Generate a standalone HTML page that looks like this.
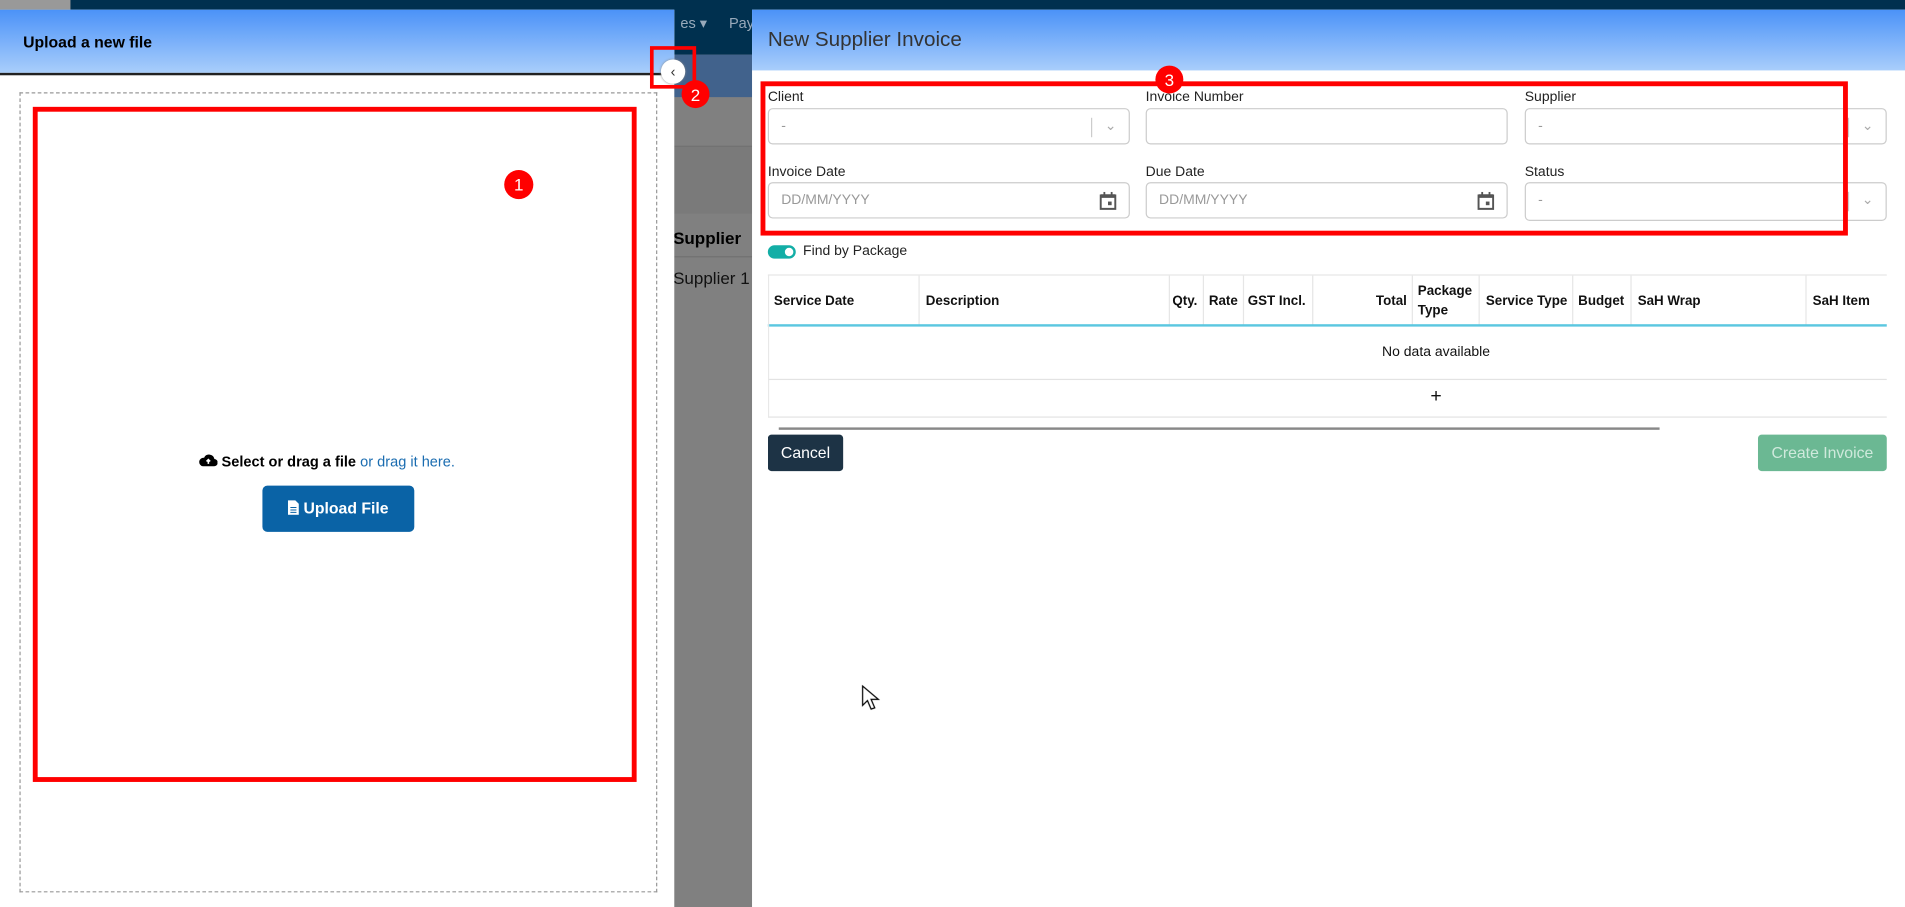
<!DOCTYPE html>
<html><head><meta charset="utf-8"><style>
html,body{margin:0;padding:0;width:1905px;height:907px;overflow:hidden;background:#808080}
#s{position:absolute;left:0;top:0;width:1568px;height:747px;transform:scale(1.21492,1.2142);transform-origin:0 0;font-family:"Liberation Sans",sans-serif;background:#808080}
.a{position:absolute}
.hdr{background:linear-gradient(#4b92f8,#a9cefb)}
.red{position:absolute;border:4px solid #f00;box-sizing:border-box}
.badge{position:absolute;width:24px;height:24px;border-radius:50%;background:#f00;color:#fff;font-size:14px;text-align:center;line-height:24px}
.lbl{position:absolute;font-size:11.5px;color:#222}
.inp{position:absolute;height:30px;border:1px solid #ccc;border-radius:4px;box-sizing:border-box;background:#fff;font-size:11.5px;color:#999;line-height:28px;padding-left:10px}
.th{position:absolute;top:227px;height:41px;font-size:11px;font-weight:bold;color:#111;display:flex;align-items:center;border-left:1px solid #e6e6e6;box-sizing:border-box;padding-left:5px;white-space:nowrap}
</style></head><body><div id="s">
<div class="a" style="left:0;top:0;width:1568px;height:45px;background:#00304f"></div>
<div class="a" style="left:0;top:0;width:58px;height:8px;background:#999"></div>
<div class="a" style="left:555px;top:45px;width:64px;height:35px;background:#41628c"></div>
<div class="a" style="left:555px;top:120px;width:64px;height:1px;background:#707070"></div>
<div class="a" style="left:555px;top:121px;width:64px;height:55px;background:#7a7a7a"></div>
<div class="a" style="left:555px;top:211px;width:64px;height:1px;background:#707070"></div>
<div class="a" style="left:560px;top:12px;font-size:12px;color:#9ab">es ▾</div>
<div class="a" style="left:600px;top:12px;font-size:12px;color:#9ab">Pay</div>
<div class="a" style="left:554px;top:188px;font-size:14px;font-weight:bold;color:#000">Supplier</div>
<div class="a" style="left:554px;top:221px;font-size:14px;color:#111">Supplier 1</div>

<div class="a" style="left:0;top:8px;width:555px;height:739px;background:#fff"></div>
<div class="a hdr" style="left:0;top:8px;width:555px;height:52px;border-bottom:2px solid #222"></div>
<div class="a" style="left:19px;top:27px;font-size:13px;font-weight:bold;color:#000">Upload a new file</div>
<div class="a" style="left:16px;top:76px;width:525px;height:659px;border:1px dashed #999;box-sizing:border-box"></div>
<div class="red" style="left:27px;top:88px;width:497px;height:556px"></div>
<div class="badge" style="left:415px;top:140px">1</div>
<div class="a" style="left:163px;top:373px;font-size:12px;color:#000;white-space:nowrap">
<svg width="16" height="12" viewBox="0 0 16 12" style="vertical-align:-1px"><path d="M4 11h9a3 3 0 0 0 .5-6A4.5 4.5 0 0 0 5 4 3.5 3.5 0 0 0 4 11z" fill="#000"/><path d="M8.5 9V6M7 7l1.5-1.5L10 7" stroke="#fff" stroke-width="1.3" fill="none"/></svg>
<b>Select or drag a file</b> <span style="color:#1a6cb0">or drag it here.</span></div>
<div class="a" style="left:216px;top:400px;width:125px;height:38px;background:#0a63a6;border-radius:4px;color:#fff;font-weight:bold;font-size:13px;text-align:center;line-height:38px">
<svg width="9" height="12" viewBox="0 0 9 12" style="vertical-align:-1px"><path d="M0 0h6l3 3v9H0z" fill="#fff"/><path d="M2 6h5M2 8h5M2 10h5" stroke="#0a63a6" stroke-width=".8"/></svg> Upload File</div>

<div class="a" style="left:544px;top:49px;width:20px;height:20px;border-radius:50%;background:#fff;box-shadow:0 0 2px #888;font-size:12px;text-align:center;line-height:20px;color:#333">‹</div>
<div class="red" style="left:535px;top:38px;width:38px;height:35px;border-width:3px"></div>
<div class="badge" style="left:561px;top:66px;width:23px;height:23px">2</div>

<div class="a" style="left:619px;top:8px;width:949px;height:739px;background:#fff"></div>
<div class="a hdr" style="left:619px;top:8px;width:949px;height:50px"></div>
<div class="a" style="left:632px;top:23px;font-size:17px;color:#333">New Supplier Invoice</div>

<div class="lbl" style="left:632px;top:74px">Client</div>
<div class="lbl" style="left:943px;top:74px">Invoice Number</div>
<div class="lbl" style="left:1255px;top:74px">Supplier</div>
<div class="inp" style="left:632px;top:89px;width:298px">-<span style="position:absolute;right:30px;top:7px;height:16px;border-left:1px solid #ccc"></span><span style="position:absolute;right:10px;top:0;color:#aaa">⌄</span></div>
<div class="inp" style="left:943px;top:89px;width:298px"></div>
<div class="inp" style="left:1255px;top:89px;width:298px">-<span style="position:absolute;right:30px;top:7px;height:16px;border-left:1px solid #ccc"></span><span style="position:absolute;right:10px;top:0;color:#aaa">⌄</span></div>
<div class="lbl" style="left:632px;top:136px">Invoice Date</div>
<div class="lbl" style="left:943px;top:136px">Due Date</div>
<div class="lbl" style="left:1255px;top:136px">Status</div>
<div class="inp" style="left:632px;top:150px;width:298px">DD/MM/YYYY<svg class="a" style="right:10px;top:7px" width="14" height="15" viewBox="0 0 14 15"><path d="M1 3h12v11H1z" fill="none" stroke="#555" stroke-width="1.6"/><path d="M1 2h12v3H1z" fill="#555"/><path d="M4 0v3M10 0v3" stroke="#555" stroke-width="1.5"/><rect x="7" y="8" width="3" height="3" fill="#555"/></svg></div>
<div class="inp" style="left:943px;top:150px;width:298px">DD/MM/YYYY<svg class="a" style="right:10px;top:7px" width="14" height="15" viewBox="0 0 14 15"><path d="M1 3h12v11H1z" fill="none" stroke="#555" stroke-width="1.6"/><path d="M1 2h12v3H1z" fill="#555"/><path d="M4 0v3M10 0v3" stroke="#555" stroke-width="1.5"/><rect x="7" y="8" width="3" height="3" fill="#555"/></svg></div>
<div class="inp" style="left:1255px;top:150px;width:298px;height:32px">-<span style="position:absolute;right:30px;top:7px;height:16px;border-left:1px solid #ccc"></span><span style="position:absolute;right:10px;top:0;color:#aaa">⌄</span></div>
<div class="red" style="left:626px;top:67px;width:895px;height:127px"></div>
<div class="badge" style="left:951px;top:54px;width:23px;height:23px">3</div>

<div class="a" style="left:632px;top:202px;width:23px;height:11px;border-radius:6px;background:#13aea6"></div>
<div class="a" style="left:646px;top:204px;width:7px;height:7px;border-radius:50%;background:#fff"></div>
<div class="a" style="left:661px;top:201px;font-size:11.5px;color:#222">Find by Package</div>

<div class="a" style="left:632px;top:226px;width:921px;height:1px;background:#e6e6e6"></div>
<div class="th" style="left:632px;width:124px;border-left:none">Service Date</div>
<div class="th" style="left:756px;width:206px">Description</div>
<div class="th" style="left:962px;width:28px;padding-left:2px">Qty.</div>
<div class="th" style="left:990px;width:33px;padding-left:4px">Rate</div>
<div class="th" style="left:1023px;width:57px;padding-left:3px">GST Incl.</div>
<div class="th" style="left:1080px;width:82px;justify-content:flex-end;padding-right:4px">Total</div>
<div class="th" style="left:1162px;width:55px;line-height:16px;padding-left:4px;white-space:normal">Package<br>Type</div>
<div class="th" style="left:1217px;width:77px">Service Type</div>
<div class="th" style="left:1294px;width:48px;padding-left:4px">Budget</div>
<div class="th" style="left:1342px;width:144px">SaH Wrap</div>
<div class="th" style="left:1486px;width:67px">SaH Item</div>
<div class="a" style="left:632px;top:267px;width:921px;height:2px;background:#5bc7e0"></div>
<div class="a" style="left:632px;top:284px;width:1100px;text-align:center;font-size:11.5px;color:#111">No data available</div>
<div class="a" style="left:632px;top:312px;width:921px;height:1px;background:#e3e3e3"></div>
<div class="a" style="left:632px;top:318px;width:1100px;text-align:center;font-size:16px;color:#111">+</div>
<div class="a" style="left:632px;top:343px;width:921px;height:1px;background:#e3e3e3"></div>
<div class="a" style="left:632px;top:227px;width:1px;height:117px;background:#e6e6e6"></div>
<div class="a" style="left:641px;top:352px;width:725px;height:2px;background:#888"></div>
<div class="a" style="left:632px;top:358px;width:62px;height:30px;background:#1d3345;border-radius:3px;color:#fff;font-size:13px;text-align:center;line-height:30px">Cancel</div>
<div class="a" style="left:1447px;top:358px;width:106px;height:30px;background:#6bb893;border-radius:3px;color:#cfe9dc;font-size:13px;text-align:center;line-height:30px">Create Invoice</div>

<svg class="a" style="left:709px;top:564px" width="16" height="22" viewBox="0 0 16 22"><path d="M1 1v16l4-4 3 7 3-1-3-7h6z" fill="#fff" stroke="#000" stroke-width="1"/></svg>
</div></body></html>
